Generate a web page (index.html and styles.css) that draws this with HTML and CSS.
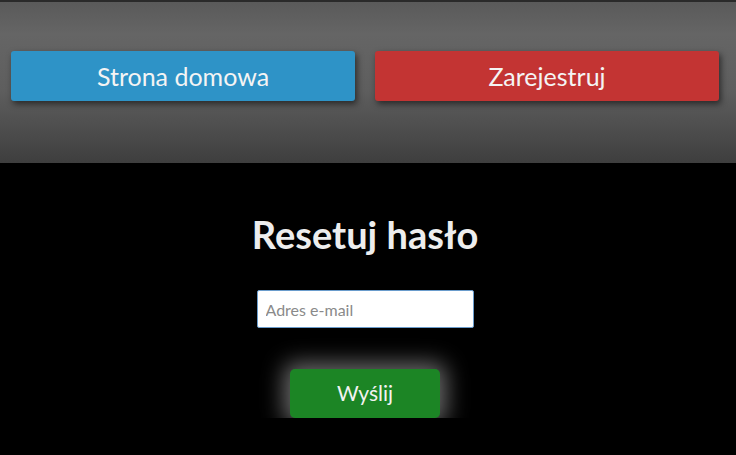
FILE: index.html
```html
<!DOCTYPE html>
<html lang="pl">
<head>
<meta charset="utf-8">
<link rel="stylesheet" href="styles.css">
</head>
<body>
<header class="top">
  <nav class="nav">
    <a class="btn btn-blue" href="#">Strona domowa</a>
    <a class="btn btn-red" href="#">Zarejestruj</a>
  </nav>
</header>
<main class="main">
  <h1 class="title">Resetuj hasło</h1>
  <input class="email" type="text" placeholder="Adres e-mail">
  <button class="send">Wyślij</button>
</main>
</body>
</html>
```
FILE: styles.css
```css
html, body {
  margin: 0;
  padding: 0;
  background: #000;
  font-family: Lato, "Open Sans", sans-serif;
}
.top {
  height: 163px;
  box-sizing: border-box;
  border-top: 2px solid #2a2a2a;
  background: linear-gradient(180deg, #5a5a5a 0%, #656565 20%, #5e5e5e 55%, #494949 85%, #3e3e3e 100%);
  padding-top: 49px;
}
.nav {
  display: flex;
  gap: 20px;
  padding: 0 17px 0 11px;
}
.btn {
  flex: 1;
  height: 50px;
  display: flex;
  align-items: center;
  justify-content: center;
  border-radius: 3px;
  color: #f4f4f4;
  font-size: 25px;
  text-decoration: none;
  box-shadow: 2px 3px 6px rgba(0,0,0,0.55);
}
.btn-blue { background: #2e93c7; }
.btn-red { background: #c33433; }
.main {
  display: flex;
  flex-direction: column;
  align-items: center;
  padding-right: 6px;
}
.title {
  margin: 48px 0 0;
  color: #ededed;
  font-size: 38px;
  font-weight: 700;
  line-height: 46px;
}
.email {
  margin-top: 33px;
  width: 217px;
  height: 38px;
  box-sizing: border-box;
  border: 1px solid #6a9ccc;
  border-radius: 2px;
  background: #fff;
  padding: 0 8px;
  font-family: Lato, sans-serif;
  font-size: 16px;
  color: #333;
}
.email::placeholder { color: #8a8a8a; }
.send {
  margin-top: 41px;
  width: 150px;
  height: 49px;
  border: none;
  border-radius: 5px;
  background: #1c8525;
  color: #f2f2f2;
  font-family: Lato, sans-serif;
  font-size: 21px;
  padding: 0 0 2px;
  box-shadow: 0 0 22px 6px rgba(255,255,255,0.42);
}
```
